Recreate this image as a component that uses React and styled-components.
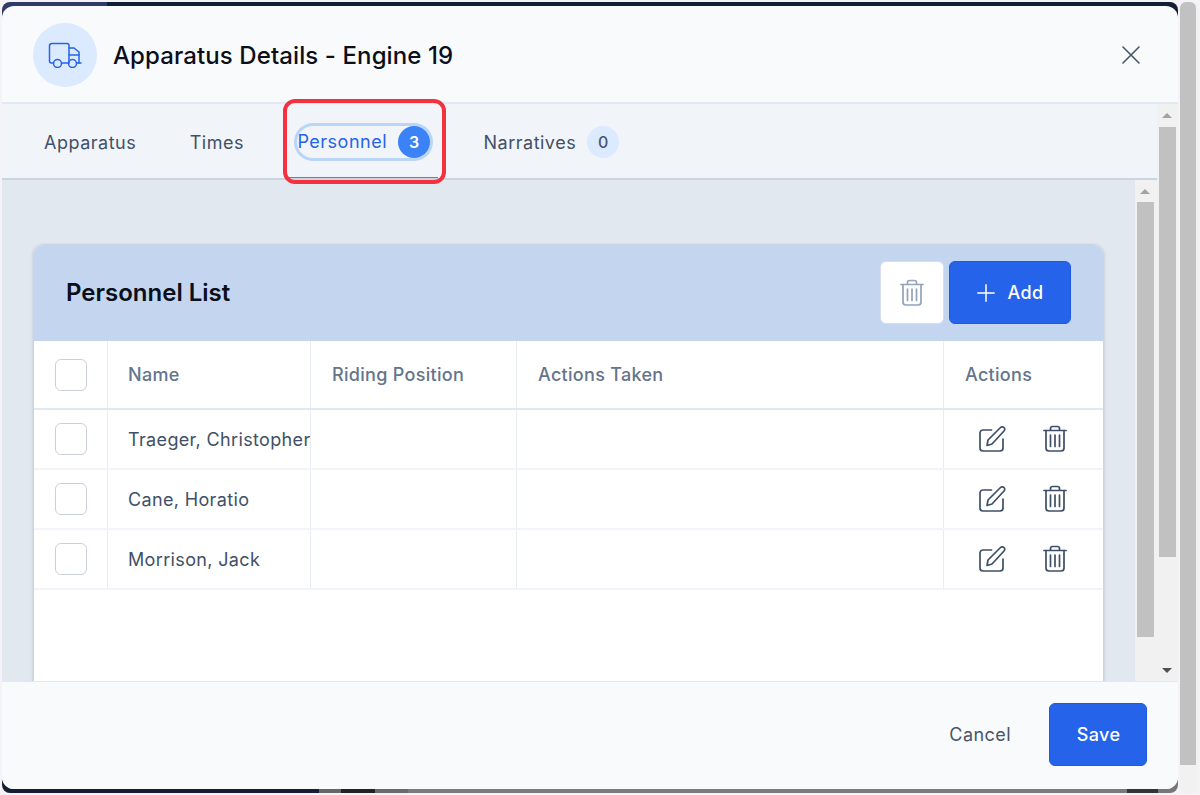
import styled, { createGlobalStyle } from "styled-components"

const GlobalStyle = createGlobalStyle`
    * { box-sizing: border-box; }
    html, body { margin: 0; padding: 0; height: 100%; overflow: hidden; }
    body { background: #f5f3f7; font-family: Inter, "Liberation Sans", sans-serif; }
`

const Page = styled.div`
    display: flex;
    width: 1200px;
    height: 795px;
    padding: 2px 2px 2px 2px;
`

const Backdrop = styled.div`
    width: 1178px;
    height: 791px;
    padding: 4px 0;
    border-radius: 8px;
    background:
        linear-gradient(to right, #2e3b68 0 105px, #141e33 105px) top / 100% 50% no-repeat,
        linear-gradient(to right, #141e33 0 317px, #666 317px 339px, #222 339px 373px, #6b6b6b 373px 406px, #7a7a7a 406px 1125px, #333 1125px 1156px, #777 1156px) bottom / 100% 50% no-repeat;
`

const PageScrollbar = styled.div`
    width: 18px;
    height: 791px;
    margin-left: 2px;
    border-radius: 6px;
    background: #f1f1f1;
`

const PageThumb = styled.div`
    width: 16px;
    height: 763px;
    border-radius: 6px 6px 0 0;
    background: #c1c1c1;
`

const Modal = styled.div`
    position: relative;
    display: flex;
    flex-direction: column;
    height: 783px;
    border-radius: 12px;
    overflow: hidden;
    background: #f8fafc;
`

const Header = styled.header`
    display: flex;
    align-items: center;
    flex: none;
    height: 98px;
    padding: 2px 31px 0;
    border-bottom: 2px solid #e2e8f0;
`

const IconCircle = styled.div`
    display: flex;
    align-items: center;
    justify-content: center;
    width: 64px;
    height: 64px;
    margin-right: 16px;
    border-radius: 50%;
    background: #dbeafe;
`

const Title = styled.h1`
    margin: 1px 0 0;
    font-size: 24px;
    font-weight: 500;
    line-height: 32px;
    letter-spacing: 0.1px;
    color: #0b0f19;
`

const CloseButton = styled.button`
    display: flex;
    margin-left: auto;
    margin-right: 7px;
    padding: 0;
    border: 0;
    background: none;
`

const Main = styled.div`
    display: flex;
    flex: none;
    height: 577px;
`

const MainColumn = styled.div`
    display: flex;
    flex-direction: column;
    flex: 1;
    min-width: 0;
`

const Tabs = styled.nav`
    display: flex;
    flex: none;
    gap: 37.5px;
    height: 76px;
    padding: 2px 0 0 34px;
    border-bottom: 2px solid #cbd5e1;
    background: #f1f5f9;
`

const Tab = styled.div`
    position: relative;
    display: flex;
    align-items: center;
    gap: 11px;
    padding: 0 8px;
    font-size: 18px;
    letter-spacing: 0.5px;
    color: ${({ $active }) => ($active ? "#2563eb" : "#415066")};
    ${({ $active }) => $active && "border-bottom: 1px solid #5b7fd6;"}
`

const FocusRing = styled.span`
    display: flex;
    align-items: center;
    gap: 11px;
    border-radius: 20px;
    box-shadow: 0 0 0 3px #b9d5f8;
`

const Badge = styled.span`
    display: flex;
    align-items: center;
    justify-content: center;
    width: 32px;
    height: 32px;
    border-radius: 50%;
    font-size: 16px;
    letter-spacing: 0;
    font-weight: ${({ $active }) => ($active ? 600 : 500)};
    color: ${({ $active }) => ($active ? "#fff" : "#475569")};
    background: ${({ $active }) => ($active ? "#3b82f6" : "#dbeafe")};
`

const Callout = styled.div`
    position: absolute;
    left: -6px;
    top: -7px;
    width: 163px;
    height: 85px;
    border: 4px solid #f4313f;
    border-radius: 12px;
    pointer-events: none;
`

const ContentArea = styled.div`
    display: flex;
    flex: 1;
    min-height: 0;
    background: #e2e8f0;
`

const ContentScroll = styled.div`
    flex: 1;
    min-width: 0;
    padding: 64px 31px 0 31px;
    overflow: hidden;
`

const Scrollbar = styled.div`
    display: flex;
    flex-direction: column;
    flex: none;
    width: ${({ $width }) => $width}px;
    padding-right: ${({ $width }) => $width - 20}px;
    background: #f1f1f1;
`

const ArrowBox = styled.div`
    display: flex;
    align-items: center;
    justify-content: center;
    flex: none;
    height: ${({ $height }) => $height}px;
    margin-top: ${({ $down }) => ($down ? "auto" : "0")};
`

const Arrow = styled.span`
    width: 0;
    height: 0;
    border-left: 5px solid transparent;
    border-right: 5px solid transparent;
    ${({ $down }) => ($down ? "border-top: 5px solid #505050;" : "border-bottom: 5px solid #a3a3a3;")}
`

const Thumb = styled.div`
    flex: none;
    height: ${({ $height }) => $height}px;
    margin: 0 1px 0 2px;
    background: #c1c1c1;
`

const Card = styled.section`
    min-height: 600px;
    border: 1px solid #cbd5e1;
    border-radius: 10px 10px 0 0;
    background: #fff;
    overflow: hidden;
    box-shadow: 0 1px 3px rgba(100, 116, 139, 0.35);
`

const CardHeader = styled.div`
    display: flex;
    align-items: center;
    height: 96px;
    padding: 0 32px 1px;
    background: #c4d5f0;
`

const CardTitle = styled.h2`
    margin: 0 auto 0 0;
    font-size: 24px;
    font-weight: 600;
    color: #0b0f19;
`

const IconButton = styled.button`
    display: flex;
    align-items: center;
    justify-content: center;
    width: 64px;
    height: 63px;
    margin-right: 5px;
    padding: 0;
    border: 1px solid #d5dfee;
    border-radius: 6px;
    background: #fff;
`

const PrimaryButton = styled.button`
    display: flex;
    align-items: center;
    justify-content: center;
    gap: 12px;
    width: ${({ $width }) => $width}px;
    height: 63px;
    padding: 0 0 0 1px;
    border: 1px solid #1d5ae0;
    border-radius: 6px;
    font-family: inherit;
    font-size: 18px;
    font-weight: 550;
    letter-spacing: 0.4px;
    color: #fff;
    background: #2563eb;
`

const Row = styled.div`
    display: grid;
    grid-template-columns: 73px 203px 206px 427px 1fr;
    height: ${({ $head }) => ($head ? 69 : 60)}px;
    border-bottom: 2px solid ${({ $head }) => ($head ? "#e2e8f0" : "#f1f5f9")};
    font-size: 18px;
    font-weight: ${({ $head }) => ($head ? 500 : 400)};
    letter-spacing: ${({ $head }) => ($head ? 0.3 : 0.35)}px;
    color: ${({ $head }) => ($head ? "#64748b" : "#415066")};
`

const Cell = styled.div`
    display: flex;
    align-items: center;
    padding-left: 21px;
    white-space: nowrap;
    border-left: 1px solid #e8edf4;

    &:first-child {
        justify-content: center;
        padding-left: 0;
        border-left: 0;
    }
`

const NameCell = styled(Cell)`
    padding-left: 20px;
`

const ActionsCell = styled(Cell)`
    gap: 36px;
    padding-left: 35px;
`

const Checkbox = styled.span`
    display: block;
    width: 32px;
    height: 32px;
    border: 1px solid #cbd0d8;
    border-radius: 6px;
    background: #fff;
`

const Footer = styled.footer`
    display: flex;
    align-items: center;
    justify-content: flex-end;
    flex: none;
    height: 108px;
    padding: 0 31px 2px 0;
    border-top: 1px solid #e2e8f0;
    background: #f8fafc;
`

const CancelButton = styled.button`
    margin-right: 38px;
    padding: 0;
    border: 0;
    font-family: inherit;
    font-size: 18px;
    letter-spacing: 0.45px;
    color: #475569;
    background: none;
`

const TruckIcon = () => (
    <svg width="34" height="26" viewBox="48 42 34 26" fill="none" stroke="#2563eb" strokeWidth="1.5" strokeLinecap="round" strokeLinejoin="round">
        <path d="M53.5 63 H51.5 a2 2 0 0 1 -2 -2 V46 a2.5 2.5 0 0 1 2.5 -2.5 H67 a2 2 0 0 1 2 2 V63" />
        <path d="M61.5 63 H68.5" />
        <path d="M69 48 H74 L79 52 V63 H76.5" />
        <path d="M69 55 H79" />
        <path d="M79 63 H81" />
        <circle cx="57.5" cy="63.5" r="4" />
        <circle cx="72.5" cy="63.5" r="4" />
    </svg>
)

const CloseIcon = () => (
    <svg width="18" height="18" viewBox="0 0 18 18" fill="none" stroke="#475569" strokeWidth="1.6" strokeLinecap="round">
        <path d="M1 1 L17 17 M17 1 L1 17" />
    </svg>
)

const PlusIcon = () => (
    <svg width="18" height="18" viewBox="0 0 18 18" fill="none" stroke="#fff" strokeWidth="1.5" strokeLinecap="round">
        <path d="M9 0.8 V17.2 M0.8 9 H17.2" />
    </svg>
)

const TrashIcon = ({ color }) => (
    <svg width="24" height="28" viewBox="0 0 24 28" fill="none" stroke={color} strokeWidth="1.7" strokeLinecap="round" strokeLinejoin="round">
        <path d="M1 5.5 H23" />
        <path d="M7.5 5 V3.5 a2 2 0 0 1 2 -2 H14.5 a2 2 0 0 1 2 2 V5" />
        <path d="M3 5.5 V23 a3 3 0 0 0 3 3 H18 a3 3 0 0 0 3 -3 V5.5" />
        <path d="M7.5 10 V21.5 M12 10 V21.5 M16.5 10 V21.5" />
    </svg>
)

const EditIcon = () => (
    <svg width="28" height="28" viewBox="0 0 28 28" fill="none" stroke="#3f4f68" strokeWidth="1.7" strokeLinecap="round" strokeLinejoin="round">
        <path d="M12.5 5 H4 a3 3 0 0 0 -3 3 V23 a3 3 0 0 0 3 3 H21 a3 3 0 0 0 3 -3 V14" />
        <path d="M8 20.5 L9 15 L21.5 2.5 a2.4 2.4 0 0 1 3.5 3.5 L13 19 Z" />
    </svg>
)

const people = ["Traeger, Christopher", "Cane, Horatio", "Morrison, Jack"]

const ScrollTrack = ({ width, thumb, top, down }) => (
    <Scrollbar $width={width}>
        <ArrowBox $height={top}><Arrow /></ArrowBox>
        <Thumb $height={thumb} />
        {down && <ArrowBox $height={22} $down><Arrow $down /></ArrowBox>}
    </Scrollbar>
)

const App = () => (
    <>
        <GlobalStyle />
        <Page>
            <Backdrop>
                <Modal>
                    <Header>
                        <IconCircle><TruckIcon /></IconCircle>
                        <Title>Apparatus Details - Engine 19</Title>
                        <CloseButton><CloseIcon /></CloseButton>
                    </Header>
                    <Main>
                        <MainColumn>
                            <Tabs>
                                <Tab>Apparatus</Tab>
                                <Tab>Times</Tab>
                                <Tab $active>
                                    <FocusRing>
                                        Personnel
                                        <Badge $active>3</Badge>
                                    </FocusRing>
                                    <Callout />
                                </Tab>
                                <Tab>
                                    Narratives
                                    <Badge>0</Badge>
                                </Tab>
                            </Tabs>
                            <ContentArea>
                                <ContentScroll>
                                    <Card>
                                        <CardHeader>
                                            <CardTitle>Personnel List</CardTitle>
                                            <IconButton><TrashIcon color="#94a3b8" /></IconButton>
                                            <PrimaryButton $width={122}><PlusIcon />Add</PrimaryButton>
                                        </CardHeader>
                                        <Row $head>
                                            <Cell><Checkbox /></Cell>
                                            <NameCell>Name</NameCell>
                                            <Cell>Riding Position</Cell>
                                            <Cell>Actions Taken</Cell>
                                            <Cell>Actions</Cell>
                                        </Row>
                                        {people.map((name) => (
                                            <Row key={name}>
                                                <Cell><Checkbox /></Cell>
                                                <NameCell>{name}</NameCell>
                                                <Cell />
                                                <Cell />
                                                <ActionsCell>
                                                    <EditIcon />
                                                    <TrashIcon color="#3f4f68" />
                                                </ActionsCell>
                                            </Row>
                                        ))}
                                    </Card>
                                </ContentScroll>
                                <ScrollTrack width={22} thumb={435} top={22} />
                            </ContentArea>
                        </MainColumn>
                        <ScrollTrack width={21} thumb={430} top={23} down />
                    </Main>
                    <Footer>
                        <CancelButton>Cancel</CancelButton>
                        <PrimaryButton $width={98}>Save</PrimaryButton>
                    </Footer>
                </Modal>
            </Backdrop>
            <PageScrollbar><PageThumb /></PageScrollbar>
        </Page>
    </>
)

export default App
